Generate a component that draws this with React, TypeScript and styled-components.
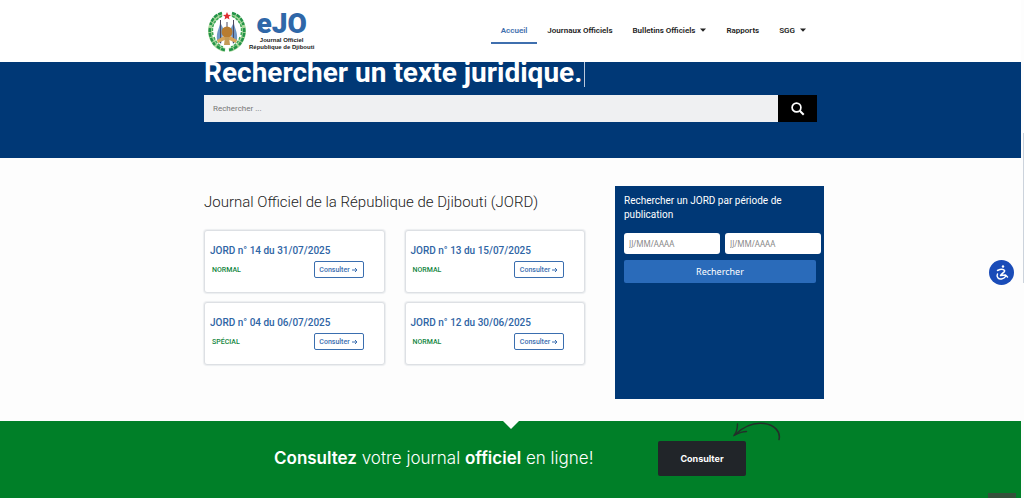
import React from "react";
import styled, { createGlobalStyle, css } from "styled-components";

const GlobalStyle = createGlobalStyle`
  *, *::before, *::after { box-sizing: border-box; }
  body {
    margin: 0;
    background: #fdfdfd;
    color: #222;
    font-family: Roboto, "Liberation Sans", sans-serif;
    overflow: hidden;
  }
  h1, h2, h3, p { margin: 0; }
  a { text-decoration: none; color: inherit; }
  button, input { font: inherit; margin: 0; border: 0; }
`;

const Page = styled.div`
  position: relative;
  padding-right: 3px;
`;

const Container = styled.div`
  width: 100%;
  max-width: 627px;
  margin: 0 auto;
`;

const Header = styled.header`
  position: relative;
  z-index: 2;
  background: #fff;
`;

const HeaderRow = styled(Container)`
  display: flex;
  align-items: center;
  justify-content: space-between;
  height: 62px;
  padding: 0 8px 0 11px;
`;

const Brand = styled.a`
  display: flex;
  align-items: center;
  gap: 3px;
`;

const BrandText = styled.span`
  display: flex;
  flex-direction: column;
  align-items: center;
  font: 700 6px/7px "Liberation Sans", sans-serif;
  color: #222;
  white-space: nowrap;
`;

const BrandName = styled.span`
  font: 900 28px/26px Roboto, sans-serif;
  color: #2f67a8;
`;

const Nav = styled.nav`
  display: flex;
  height: 26px;
`;

const NavLink = styled.a<{ $active?: boolean }>`
  display: flex;
  align-items: center;
  gap: 5px;
  padding: 0 10px;
  font-size: 8px;
  font-weight: 600;
  color: ${(p) => (p.$active ? "#3f6fae" : "#222")};
  border-bottom: 2px solid ${(p) => (p.$active ? "#3f6fae" : "transparent")};
  white-space: nowrap;
`;

const Hero = styled.section`
  background: #003876;
  height: 96px;
`;

const HeroInner = styled(Container)`
  padding: 0 7px;
`;

const HeroTitle = styled.h1`
  display: flex;
  align-items: center;
  height: 33px;
  padding-bottom: 12px;
  font-size: 28px;
  line-height: 32px;
  font-weight: 700;
  color: #fff;
  white-space: nowrap;
`;

const Caret = styled.span`
  width: 1px;
  height: 28px;
  margin-left: 2px;
  background: #b9c8dc;
`;

const SearchForm = styled.form`
  display: flex;
  height: 27px;
`;

const SearchInput = styled.input`
  flex: 1;
  min-width: 0;
  padding: 0 9px;
  background: #eff0f2;
  border-radius: 0;
  font-size: 8px;
  color: #555;
  &::placeholder { color: #777; opacity: 1; }
`;

const SearchButton = styled.button`
  display: flex;
  align-items: center;
  justify-content: center;
  width: 39px;
  padding: 0;
  background: #000;
`;

const Main = styled(Container)`
  display: flex;
  align-items: stretch;
  justify-content: space-between;
  padding: 28px 0 22px 7px;
`;

const Journals = styled.section`
  width: 381px;
`;

const JournalsTitle = styled.h2`
  padding-top: 5px;
  font-size: 15px;
  line-height: 22px;
  font-weight: 300;
  color: #222;
  white-space: nowrap;
`;

const CardGrid = styled.div`
  display: grid;
  grid-template-columns: 1fr 1fr;
  gap: 9px 20px;
  margin-top: 17px;
`;

const Card = styled.article`
  height: 63px;
  padding: 13px 20px 0 5px;
  background: #fff;
  border: 1px solid #dde0e4;
  border-radius: 3px;
  box-shadow: 0 0 1px 1px #eceef0;
`;

const CardTitle = styled.h3`
  font-size: 10px;
  line-height: 14px;
  font-weight: 500;
  color: #2f65a5;
  white-space: nowrap;
`;

const CardRow = styled.div`
  display: flex;
  align-items: center;
  justify-content: space-between;
  margin-top: 3px;
  padding-left: 2px;
`;

const Kind = styled.span`
  font-size: 7px;
  font-weight: 500;
  color: #118540;
`;

const CardLink = styled.a`
  display: flex;
  align-items: center;
  justify-content: center;
  gap: 2px;
  width: 50px;
  height: 17px;
  border: 1px solid #3a6eaf;
  border-radius: 2px;
  font-size: 7px;
  font-weight: 500;
  color: #3a6eaf;
`;

const Period = styled.aside`
  width: 209px;
  min-height: 213px;
  padding: 8px 3px 0 9px;
  background: #003876;
`;

const PeriodTitle = styled.h2`
  font-size: 10px;
  line-height: 14px;
  font-weight: 400;
  color: #fff;
`;

const PeriodFields = styled.div`
  display: grid;
  grid-template-columns: 1fr 1fr;
  gap: 5px;
  margin-top: 11px;
`;

const DateInput = styled.input`
  width: 100%;
  height: 21px;
  padding: 0 5px;
  border-radius: 3px;
  background: #fff;
  font: 8px "Noto Sans", sans-serif;
  &::placeholder { color: #888; opacity: 1; }
`;

const PeriodButton = styled.button`
  display: block;
  width: calc(100% - 5px);
  height: 23px;
  margin-top: 6px;
  border-radius: 2px;
  background: #2a6bba;
  font: 9px "Noto Sans", sans-serif;
  color: #fff;
`;

const Banner = styled.section`
  position: relative;
  height: 77px;
  background: #007f28;
`;

const Notch = styled.svg`
  position: absolute;
  top: 0;
  left: 50%;
  transform: translateX(-50%);
`;

const BannerInner = styled(Container)`
  display: flex;
  align-items: center;
  height: 74px;
  padding-left: 77px;
`;

const Slogan = styled.p`
  width: 384px;
  font: 300 17px/24px Inter, sans-serif;
  color: #fff;
  white-space: nowrap;
  strong { font-weight: 600; }
`;

const BannerButton = styled.button`
  position: relative;
  width: 88px;
  height: 35px;
  border-radius: 2px;
  background: #212529;
  font: 700 9px Inter, sans-serif;
  color: #fff;
`;

const Swoosh = styled.svg`
  position: absolute;
  top: -19px;
  right: -37px;
`;

const AccessButton = styled.button`
  position: fixed;
  top: 260px;
  right: 10px;
  width: 25px;
  height: 25px;
  padding: 0;
  border-radius: 50%;
  background: #1a4cb8;
`;

const edge = css`
  position: fixed;
  pointer-events: none;
`;

const ScrollThumb = styled.div`
  ${edge}
  z-index: 3;
  top: 133px;
  right: 0;
  width: 1px;
  height: 150px;
  background: #ccd3dc;
`;

const BottomTab = styled.div`
  ${edge}
  right: 8px;
  bottom: 0;
  width: 28px;
  height: 5px;
  background: #33513a;
`;

const Emblem = () => (
  <svg width="38" height="42" viewBox="0 0 38 42" aria-hidden="true">
    <path d="M14 4C1 9-1 23 6 33c3 4 6 6 11 7M24 4c13 5 15 19 8 29-3 4-6 6-11 7" fill="none" stroke="#a9d89c" strokeWidth="4" />
    <path d="M14 3C7 5 4 9 2.500 15M24 3c7 2 10 6 11.500 12M2 18c-1 6 1 12 5 17M36 18c1 6-1 12-5 17M9 36c2 2 5 4 9 4M29 36c-2 2-5 4-9 4" fill="none" stroke="#239348" strokeWidth="2.500" strokeDasharray="4 1" />
    <path d="M14 6C6 10 3 17 5 25M24 6c8 4 11 11 9 19M6 27c1 4 4 8 9 10M32 27c-1 4-4 8-9 10" fill="none" stroke="#3da755" strokeWidth="1.500" strokeDasharray="3 1" />
    <path d="M12 12c0 6-4 9-3 18l4 4 3-14zM26 12c0 6 4 9 3 18l-4 4-3-14z" fill="#7098c7" />
    <path d="M12.500 10v23M25.500 10v23M19 12v8" stroke="#4d4a60" strokeWidth="1" />
    <path d="M9 30l7-4h6l7 4-1 3-9-4-9 4z" fill="#d7a458" />
    <circle cx="19" cy="22" r="5.500" fill="#b87c30" />
    <path d="M17 27h4l1 8h-6z" fill="#c49a57" />
    <path d="M19 2l1.200 2.700 2.800.2-2.200 1.900.7 2.800-2.500-1.500-2.500 1.500.7-2.800L15 4.900l2.800-.2z" fill="#de3030" />
  </svg>
);

const Down = () => (
  <svg width="6" height="4" viewBox="0 0 6 4" aria-hidden="true">
    <path d="M0 .5h6L3 3.700z" fill="#222" />
  </svg>
);

const navItems = [
  { label: "Accueil", active: true },
  { label: "Journaux Officiels" },
  { label: "Bulletins Officiels", menu: true },
  { label: "Rapports" },
  { label: "SGG", menu: true },
];

const journals = [
  { title: "JORD n° 14 du 31/07/2025", kind: "NORMAL" },
  { title: "JORD n° 13 du 15/07/2025", kind: "NORMAL" },
  { title: "JORD n° 04 du 06/07/2025", kind: "SPÉCIAL" },
  { title: "JORD n° 12 du 30/06/2025", kind: "NORMAL" },
];

export default function App() {
  return (
    <Page>
      <GlobalStyle />
      <Header>
        <HeaderRow>
          <Brand href="#">
            <Emblem />
            <BrandText>
              <BrandName>eJO</BrandName>
              <span>Journal Officiel</span>
              <span>République de Djibouti</span>
            </BrandText>
          </Brand>
          <Nav>
            {navItems.map((item) => (
              <NavLink key={item.label} href="#" $active={item.active}>
                {item.label}
                {item.menu && <Down />}
              </NavLink>
            ))}
          </Nav>
        </HeaderRow>
      </Header>

      <Hero>
        <HeroInner>
          <HeroTitle>
            Rechercher un texte juridique.
            <Caret />
          </HeroTitle>
          <SearchForm role="search">
            <SearchInput type="search" placeholder="Rechercher ..." aria-label="Rechercher" />
            <SearchButton type="button" aria-label="Lancer la recherche">
              <svg width="14" height="14" viewBox="0 0 14 14" fill="none" stroke="#fff" aria-hidden="true">
                <circle cx="5.500" cy="5.500" r="4.400" strokeWidth="1.700" />
                <path d="M8.700 8.700l4 4" strokeWidth="2" />
              </svg>
            </SearchButton>
          </SearchForm>
        </HeroInner>
      </Hero>

      <Main as="main">
        <Journals>
          <JournalsTitle>Journal Officiel de la République de Djibouti (JORD)</JournalsTitle>
          <CardGrid>
            {journals.map((j) => (
              <Card key={j.title}>
                <CardTitle>{j.title}</CardTitle>
                <CardRow>
                  <Kind>{j.kind}</Kind>
                  <CardLink href="#">
                    Consulter
                    <svg width="6" height="6" viewBox="0 0 6 6" fill="none" stroke="#3a6eaf" aria-hidden="true">
                      <path d="M0 3h5M3 1l2 2-2 2" />
                    </svg>
                  </CardLink>
                </CardRow>
              </Card>
            ))}
          </CardGrid>
        </Journals>
        <Period>
          <PeriodTitle>Rechercher un JORD par période de publication</PeriodTitle>
          <PeriodFields>
            <DateInput type="text" placeholder="JJ/MM/AAAA" aria-label="Date de début" />
            <DateInput type="text" placeholder="JJ/MM/AAAA" aria-label="Date de fin" />
          </PeriodFields>
          <PeriodButton type="button">Rechercher</PeriodButton>
        </Period>
      </Main>

      <Banner>
        <Notch width="16" height="8" viewBox="0 0 16 8" aria-hidden="true">
          <path d="M0 0h16L8 8z" fill="#fdfdfd" />
        </Notch>
        <BannerInner>
          <Slogan>
            <strong>Consultez</strong> votre journal <strong>officiel</strong> en ligne!
          </Slogan>
          <BannerButton type="button">
            Consulter
            <Swoosh width="50" height="20" viewBox="0 0 50 20" fill="none" stroke="#23302a" strokeLinecap="round" aria-hidden="true">
              <path d="M1.500 13C12 3 22 .5 31 1.500c10 1 17 8 15 16" strokeWidth="1.600" />
              <path d="M4.500 2c0 4-1 8-3 11 4-2 8-3.500 12-3.500" strokeWidth="1.400" />
            </Swoosh>
          </BannerButton>
        </BannerInner>
      </Banner>

      <AccessButton type="button" aria-label="Accessibilité">
        <svg width="25" height="25" viewBox="0 0 25 25" fill="none" stroke="#fff" strokeWidth="1.500" strokeLinecap="round" strokeLinejoin="round" aria-hidden="true">
          <circle cx="14" cy="6.500" r="1.200" fill="#fff" stroke="none" />
          <path d="M8.500 10.500c3-1.500 6-1.500 7 0s-3 3-4 5l5-.5 2 2M8.500 14c-1.500 3 1 5.500 4 5 2-.4 3.500-1.500 4-2.500" />
        </svg>
      </AccessButton>
      <ScrollThumb />
      <BottomTab />
    </Page>
  );
}
